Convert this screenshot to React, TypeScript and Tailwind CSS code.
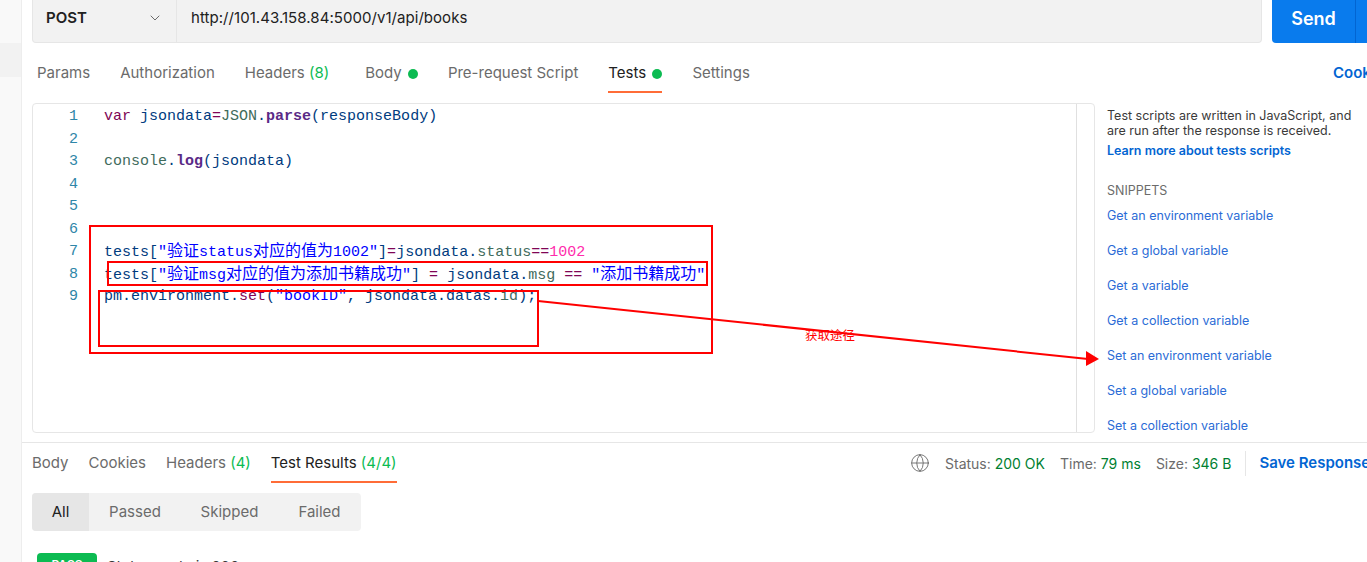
import { ChevronDown, Globe } from "lucide-react";
import type { ReactNode } from "react";

const snippets = [
  "Get an environment variable",
  "Get a global variable",
  "Get a variable",
  "Get a collection variable",
  "Set an environment variable",
  "Set a global variable",
  "Set a collection variable",
];

// small helpers for the syntax colours
const Kw = ({ children }: { children: ReactNode }) => <span className="text-[#800555]">{children}</span>;
const Nm = ({ children }: { children: ReactNode }) => <span className="text-[#003b7e]">{children}</span>;
const Pr = ({ children }: { children: ReactNode }) => <span className="text-[#3f6b5c]">{children}</span>;
const Fn = ({ children }: { children: ReactNode }) => <span className="font-bold text-[#5a2a86]">{children}</span>;
const St = ({ children }: { children: ReactNode }) => <span className="text-[#0000ff]">{children}</span>;
const Zh = ({ children }: { children: ReactNode }) => <span className="text-[16px]">{children}</span>;

const lines: ReactNode[] = [
  <>
    <Kw>var</Kw> <Nm>jsondata</Nm>
    <Kw>=</Kw>
    <Pr>JSON</Pr>
    <Nm>.</Nm>
    <Fn>parse</Fn>
    <Nm>(responseBody)</Nm>
  </>,
  "",
  <>
    <Pr>console</Pr>
    <Nm>.</Nm>
    <Fn>log</Fn>
    <Nm>(jsondata)</Nm>
  </>,
  "",
  "",
  "",
  <>
    <Nm>tests[</Nm>
    <St>
      "<Zh>验证</Zh>status<Zh>对应的值为</Zh>1002"
    </St>
    <Nm>]</Nm>
    <Kw>=</Kw>
    <Nm>jsondata.</Nm>
    <Pr>status</Pr>
    <Kw>==</Kw>
    <span className="text-[#ff2bac]">1002</span>
  </>,
  <>
    <Nm>tests[</Nm>
    <St>
      "<Zh>验证</Zh>msg<Zh>对应的值为添加书籍成功</Zh>"
    </St>
    <Nm>] </Nm>
    <Kw>=</Kw>
    <Nm> jsondata.</Nm>
    <Pr>msg</Pr> <Kw>==</Kw>{" "}
    <St>
      "<Zh>添加书籍成功</Zh>"
    </St>
  </>,
  <>
    <Nm>pm.environment.</Nm>
    <Kw>set</Kw>
    <Nm>(</Nm>
    <St>"bookID"</St>
    <Nm>, jsondata.datas.</Nm>
    <Pr>id</Pr>
    <Nm>);</Nm>
  </>,
];

export default function App() {
  return (
    <div className="relative flex h-[562px] w-[1367px] overflow-hidden bg-white font-['Inter',sans-serif] text-[15px]">
      <aside className="w-[22px] shrink-0 border-r border-[#ededed] bg-[#f9f9f9] pt-[43px]">
        <div className="h-[34px] bg-[#f2f2f2]" />
      </aside>

      <main className="flex min-w-0 flex-1 flex-col">
        {/* url bar */}
        <div className="flex h-[43px] shrink-0 gap-[10px] pl-[10px]">
          <div className="flex w-[1230px] shrink-0 rounded-b border-b border-r border-l border-[#e6e6e6] bg-[#f2f2f2] pb-[6px]">
            <div className="-mb-[6px] flex w-[144px] items-center justify-between border-r border-[#e6e6e6] pb-[6px] pl-[13px] pr-[13px] font-semibold text-[#212121]">
              POST
              <ChevronDown size={16} strokeWidth={1.5} className="text-[#6b6b6b]" />
            </div>
            <div className="flex items-center pl-[14px] tracking-[0.05px] text-[#212121]">http://101.43.158.84:5000/v1/api/books</div>
          </div>
          <div className="flex w-[105px] shrink-0 rounded-bl bg-[#097bed] text-white">
            <div className="flex w-[84px] items-center justify-center border-r border-[#0265d2] pb-[6px] text-[18px] font-semibold">Send</div>
          </div>
        </div>

        {/* request tabs */}
        <div className="flex h-[50px] shrink-0 pl-[15px] text-[#6b6b6b]">
          <div className="flex w-[1296px] shrink-0 gap-[30px]">
            <Tab>Params</Tab>
            <Tab>Authorization</Tab>
            <Tab>
              Headers <span className="text-[#0cbb52]">(8)</span>
            </Tab>
            <Tab className="ml-[6px]">
              Body <Dot />
            </Tab>
            <Tab>Pre-request Script</Tab>
            <Tab active>
              Tests <Dot />
            </Tab>
            <Tab>Settings</Tab>
          </div>
          <div className="flex items-center whitespace-nowrap pt-[10px] font-semibold text-[#0265d2]">Cookies</div>
        </div>

        {/* editor and snippets */}
        <div className="mt-[10px] flex h-[330px] shrink-0 pl-[10px]">
          <div className="flex w-[1063px] shrink-0 rounded border border-[#e6e6e6]">
            <div className="flex-1 pt-[2px] font-['Liberation_Mono','Noto_Sans_CJK_SC',monospace] text-[15px] leading-[22.5px]">
              {lines.map((line, i) => (
                <div key={i} className="flex h-[22.5px] whitespace-pre">
                  <span className="w-[45px] shrink-0 text-right text-[#2f86a8]">{i + 1}</span>
                  <span className="pl-[26px]">{line}</span>
                </div>
              ))}
            </div>
            <div className="w-[18px] border-l border-[#e0e0e0]" />
          </div>
          <div className="ml-[12px] w-[260px] shrink-0 text-[12.5px]">
            <p className="mt-[5px] leading-[15px] text-[#3a3a3a]">
              Test scripts are written in JavaScript, and
              <br />
              are run after the response is received.
            </p>
            <p className="mt-[5px] font-semibold leading-[15px] text-[#0265d2]">Learn more about tests scripts</p>
            <p className="mt-[25px] leading-[15px] text-[#6b6b6b]">SNIPPETS</p>
            <ul className="mt-[10px] flex flex-col gap-[20px] text-[#2a6bd6]">
              {snippets.map((s) => (
                <li key={s} className="leading-[15px]">
                  {s}
                </li>
              ))}
            </ul>
          </div>
        </div>

        {/* response */}
        <div className="mt-[9px] flex h-[41px] shrink-0 border-t border-[#e6e6e6] pl-[10px] text-[#6b6b6b]">
          <div className="flex w-[878px] shrink-0 gap-[20px]">
            <Tab small>Body</Tab>
            <Tab small>Cookies</Tab>
            <Tab small>
              Headers <span className="text-[#0cbb52]">(4)</span>
            </Tab>
            <Tab small active>
              Test Results <span className="text-[#0cbb52]">(4/4)</span>
            </Tab>
          </div>
          <div className="flex shrink-0 items-center whitespace-nowrap text-[14px]">
            <Globe size={20} strokeWidth={1.1} className="text-[#6b6b6b]" />
            <span className="ml-[15px]">
              Status: <span className="text-[#007f31]">200 OK</span>
            </span>
            <span className="ml-[15px]">
              Time: <span className="text-[#007f31]">79 ms</span>
            </span>
            <span className="ml-[15px]">
              Size: <span className="text-[#007f31]">346 B</span>
            </span>
            <span className="ml-[14px] h-[25px] border-l border-[#e6e6e6]" />
            <span className="ml-[13px] text-[15px] font-semibold text-[#0265d2]">Save Response</span>
          </div>
        </div>

        <div className="ml-[10px] mt-[10px] flex h-[38px] w-[329px] shrink-0 overflow-hidden rounded bg-[#f2f2f2] text-[#6b6b6b]">
          <div className="flex w-[57px] items-center justify-center bg-[#e6e6e6] text-[#212121]">All</div>
          <div className="flex w-[92px] items-center justify-center">Passed</div>
          <div className="flex w-[97px] items-center justify-center">Skipped</div>
          <div className="flex w-[83px] items-center justify-center">Failed</div>
        </div>

        <div className="ml-[15px] mt-[22px] flex shrink-0 items-start gap-[10px]">
          <span className="flex h-[24px] w-[60px] items-center justify-center rounded bg-[#0cbb52] text-[12px] font-semibold text-white">PASS</span>
          <span className="mt-[3px] text-[#3a3a3a]">Status code is 200</span>
        </div>
      </main>

      {/* hand drawn annotations on top of the screenshot */}
      <svg className="pointer-events-none absolute inset-0" width="1367" height="562" fill="none" stroke="#ff0000" strokeWidth="2">
        <rect x="90" y="226" width="622" height="127" />
        <rect x="108" y="262" width="599" height="23" />
        <rect x="99" y="291" width="439" height="55" />
        <line x1="538" y1="301" x2="1088" y2="359" />
        <polygon points="1099,359 1086,351 1086,366" fill="#ff0000" stroke="none" />
      </svg>
      <span className="absolute left-[805px] top-[327px] font-['Noto_Sans_CJK_SC',sans-serif] text-[12.5px] leading-[16px] text-[#ff0000]">获取途径</span>
    </div>
  );
}

function Dot() {
  return <span className="ml-[2px] inline-block h-[10px] w-[10px] rounded-full bg-[#0cbb52]" />;
}

function Tab({
  children,
  active,
  small,
  className = "",
}: {
  children: ReactNode;
  active?: boolean;
  small?: boolean;
  className?: string;
}) {
  return (
    <div
      className={`flex items-center whitespace-pre border-b-2 ${small ? "pt-[3px]" : "pt-[13px]"} ${
        active ? "border-[#ff6c37] text-[#212121]" : "border-transparent"
      } ${className}`}
    >
      {children}
    </div>
  );
}
